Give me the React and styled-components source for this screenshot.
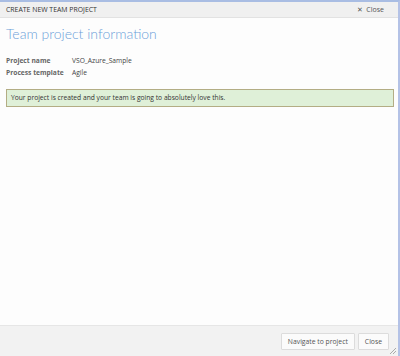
import React from "react";
import styled, { createGlobalStyle } from "styled-components";

const Global = createGlobalStyle`
  html, body { margin: 0; padding: 0; background: #fdfdfd; }
  #root { height: 356px; }
`;

const Dialog = styled.div`
  position: relative;
  width: 400px;
  height: 356px;
  box-sizing: border-box;
  display: flex;
  flex-direction: column;
  border-top: 2px solid #a9bde3;
  border-right: 2px solid #b4c2e6;
  font-family: "Open Sans", "Liberation Sans", sans-serif;
  color: #333;
  background: #fdfdfd;
`;

const TitleBar = styled.div`
  height: 15px;
  display: flex;
  align-items: center;
  justify-content: space-between;
  padding: 0 14px 0 6px;
  background: #f0f0f0;
  border-bottom: 1px solid #e2e2e2;
  font-size: 6.9px;
  color: #333;
`;

const CloseLink = styled.span`
  display: flex;
  align-items: center;
  gap: 3px;
  color: #555;
  font-size: 7px;
`;

const Body = styled.div`
  flex: 1;
  padding: 6px 5px 0 6px;
`;

const Heading = styled.h1`
  margin: 0 0 12px 0;
  font-family: Lato, "Open Sans", sans-serif;
  font-weight: 300;
  font-size: 14px;
  color: #6c9fd9;
  line-height: 20px;
`;

const InfoGrid = styled.div`
  display: grid;
  grid-template-columns: 66px auto;
  row-gap: 2px;
  font-size: 6.7px;
  line-height: 10px;
  margin-bottom: 11px;
`;

const Label = styled.div`
  font-weight: 700;
  color: #666;
`;

const Value = styled.div`
  color: #444;
`;

const Notice = styled.div`
  width: 388px;
  box-sizing: border-box;
  padding: 3px 4px;
  background: #dff0d8;
  border: 1px solid #b3ad84;
  font-size: 6.7px;
  line-height: 10px;
  color: #333;
`;

const Footer = styled.div`
  height: 30px;
  display: flex;
  align-items: center;
  justify-content: flex-end;
  gap: 3px;
  padding: 0 9px 0 0;
  background: #f2f2f2;
  border-top: 1px solid #e6e6e6;
`;

const Button = styled.button`
  height: 17px;
  padding: 0 6px;
  font-family: "Open Sans", "Liberation Sans", sans-serif;
  font-size: 6.8px;
  color: #555;
  background: #fbfbfb;
  border: 1px solid #dcdcdc;
  border-radius: 1px;
`;

const Grip = styled.svg`
  position: absolute;
  right: 1px;
  bottom: 1px;
`;

export default function App() {
  return (
    <>
      <Global />
      <Dialog>
        <TitleBar>
          <span>CREATE NEW TEAM PROJECT</span>
          <CloseLink>
            <span style={{ fontSize: "6.5px" }}>✕</span>Close
          </CloseLink>
        </TitleBar>
        <Body>
          <Heading>Team project information</Heading>
          <InfoGrid>
            <Label>Project name</Label>
            <Value>VSO_Azure_Sample</Value>
            <Label>Process template</Label>
            <Value>Agile</Value>
          </InfoGrid>
          <Notice>Your project is created and your team is going to absolutely love this.</Notice>
        </Body>
        <Footer>
          <Button>Navigate to project</Button>
          <Button>Close</Button>
        </Footer>
        <Grip width="8" height="8" viewBox="0 0 8 8">
          <path d="M7 1 L1 7 M7 4 L4 7" stroke="#aaa" strokeWidth="1" />
        </Grip>
      </Dialog>
    </>
  );
}
